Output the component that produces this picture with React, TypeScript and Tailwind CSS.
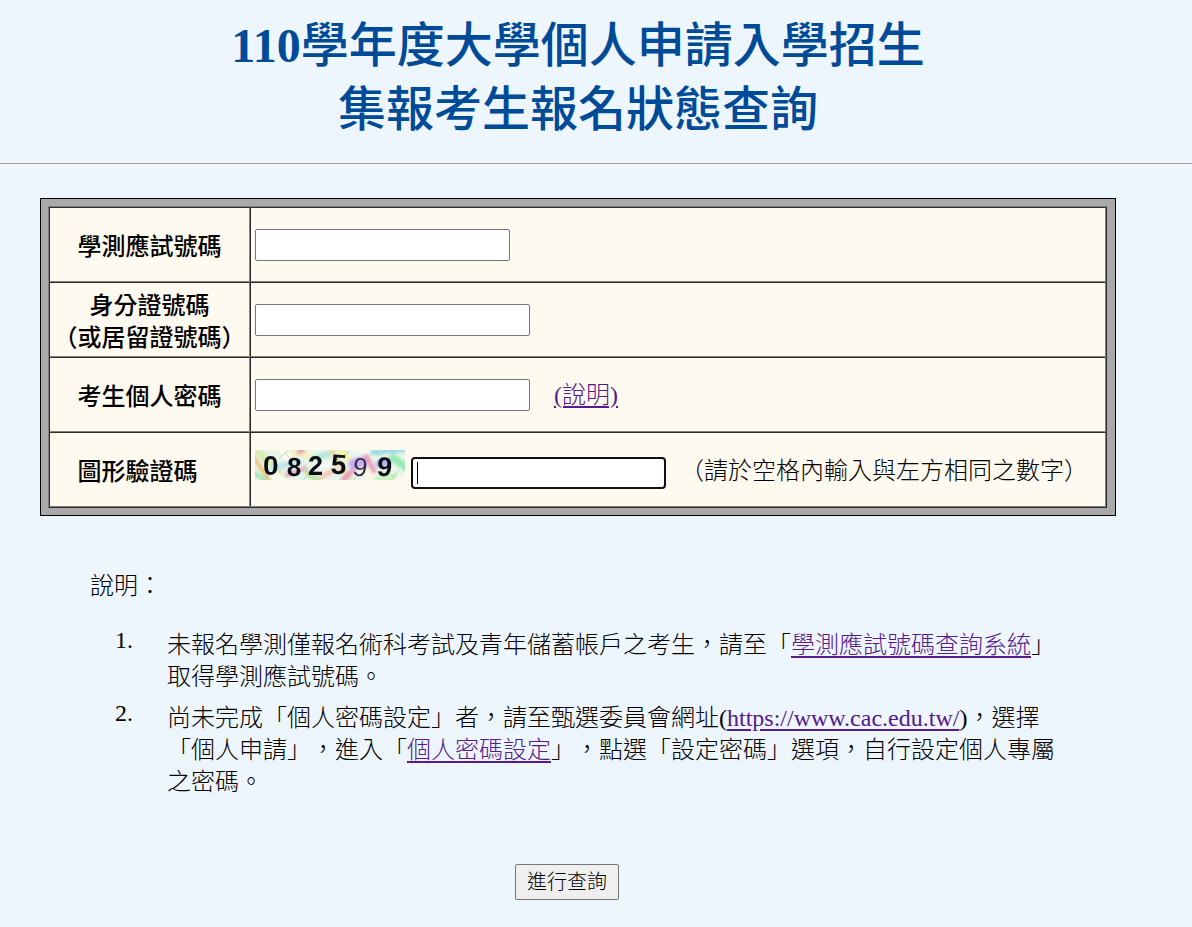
import React from 'react';

const INPUT_CLASS = 'block h-8 min-w-0 bg-white border border-[#767676] rounded-xs px-1 text-2xl';
const LINK_CLASS = 'text-[#551a8b] underline decoration-2 underline-offset-3';

interface FieldRowProps {
    id: string;
    label: React.ReactNode;
    children: React.ReactNode;
}

const FieldRow: React.FC<FieldRowProps> = ({ id, label, children }) => (
    <tr className="h-[75px] bg-[#fffaf0]">
        <th
            scope="row"
            className="w-[201px] p-0 pt-1 align-middle text-center font-medium whitespace-nowrap border border-t-[#2c2c2c] border-l-[#2c2c2c] border-r-[#808080] border-b-[#808080]"
        >
            <label htmlFor={id} className="block whitespace-pre">{label}</label>
        </th>
        <td className="py-0 pl-1 pr-1 align-middle border border-t-[#2c2c2c] border-l-[#2c2c2c] border-r-[#808080] border-b-[#808080]">
            <div className="flex items-center">{children}</div>
        </td>
    </tr>
);

const Captcha = () => (
    <svg width="150" height="30" viewBox="0 0 150 30" role="img" aria-label="082599" className="shrink-0 self-start">
        <defs>
            <filter id="soft" x="-20%" y="-20%" width="140%" height="140%">
                <feGaussianBlur stdDeviation="1.8" />
            </filter>
            <filter id="ink">
                <feGaussianBlur stdDeviation="0.4" />
            </filter>
            <clipPath id="frame">
                <rect width="150" height="30" />
            </clipPath>
        </defs>
        <g clipPath="url(#frame)">
            <rect width="150" height="30" fill="#e9f5ea" />
            <g filter="url(#soft)" fill="none" strokeLinecap="round">
                <path d="M-2 6L14 30" stroke="#f0bc75" strokeWidth="4" />
                <path d="M2 0L28 28" stroke="#d9ecae" strokeWidth="7" />
                <path d="M-2 22L12 32" stroke="#a9e3bb" strokeWidth="5" />
                <path d="M18 18L44 12" stroke="#c3e2ef" strokeWidth="6" />
                <path d="M20 26L28 30" stroke="#fbfbf0" strokeWidth="8" />
                <path d="M28 2L36 8" stroke="#fbfbf0" strokeWidth="8" />
                <path d="M38 3L56 6" stroke="#f5f1b8" strokeWidth="5" />
                <path d="M32 25L50 18" stroke="#e9b3cd" strokeWidth="5" />
                <path d="M44 2L48 0" stroke="#ec9dae" strokeWidth="5" />
                <path d="M52 22L62 30" stroke="#b8e3a0" strokeWidth="6" />
                <path d="M60 8L74 4" stroke="#b4e9df" strokeWidth="6" />
                <path d="M66 27L80 20" stroke="#f4c7b4" strokeWidth="5" />
                <path d="M62 16L76 14" stroke="#fbfbf2" strokeWidth="5" />
                <path d="M76 0L94 28" stroke="#f0d79c" strokeWidth="5" />
                <path d="M85 -2L92 8" stroke="#f6f29c" strokeWidth="6" />
                <path d="M88 30L98 20" stroke="#ea9cbb" strokeWidth="5" />
                <path d="M99 14L107 12" stroke="#cbaaf0" strokeWidth="11" />
                <path d="M108 22L120 28" stroke="#fbf9e8" strokeWidth="8" />
                <path d="M111 6L119 21" stroke="#eb9fbc" strokeWidth="5" />
                <path d="M100 0L112 1" stroke="#f8faf2" strokeWidth="6" />
                <path d="M118 2L150 -1" stroke="#9cdce4" strokeWidth="6" />
                <path d="M124 14L132 12" stroke="#b3b0ef" strokeWidth="7" />
                <path d="M138 8L152 18" stroke="#97ebb2" strokeWidth="8" />
                <path d="M122 29L140 26" stroke="#c8f2c0" strokeWidth="6" />
                <path d="M144 29L150 27" stroke="#fff6f0" strokeWidth="6" />
            </g>
            <path
                d="M24 8L34 0M30 2L34 8M48 30L58 20M78 12L94 2M98 30L106 24M120 2L128 8M136 30L144 20"
                fill="none"
                stroke="#8b9a8e"
                strokeWidth="0.6"
                opacity="0.6"
            />
            <g fill="#0b0f14" fontWeight="bold" filter="url(#ink)">
                <g fontFamily='"Liberation Sans Narrow", "Liberation Sans", sans-serif'>
                    <text x="8" y="25" fontSize="28">0</text>
                    <text x="76" y="24" fontSize="28" transform="rotate(4 82 14)">5</text>
                    <text x="98" y="26" fontSize="26" fontWeight="normal" fill="#33334e" transform="rotate(8 104 17)">9</text>
                </g>
                <g fontFamily='"Liberation Sans", Arial, sans-serif'>
                    <text x="32" y="26" fontSize="26" transform="rotate(3 39 17)">8</text>
                    <text x="53" y="25" fontSize="27">2</text>
                    <text x="122" y="26" fontSize="27" transform="rotate(4 129 17)">9</text>
                </g>
            </g>
        </g>
    </svg>
);

const App = () => {
    return (
        <div
            lang="zh-Hant"
            className="min-h-screen bg-[#edf5fd] text-black text-2xl leading-8 font-light font-['Liberation_Serif','Noto_Sans_CJK_TC',serif] [text-spacing-trim:space-all]"
        >
            <header className="border-b border-[#a0a0a0] pt-3.5 pb-[21px] pl-10 pr-19">
                <h1 className="text-center text-5xl leading-16 font-medium text-[#004b97]">
                    <span className="font-bold">110</span>學年度大學個人申請入學招生
                    <br />
                    集報考生報名狀態查詢
                </h1>
            </header>

            <form className="pl-10 pr-19 pt-[34px] pb-7" onSubmit={(e) => e.preventDefault()}>
                <div className="border border-black bg-[#a9a9a9] p-[7px] pr-2">
                    <table className="w-full border-separate border-spacing-0 border border-t-[#808080] border-l-[#808080] border-r-[#2c2c2c] border-b-[#2c2c2c]">
                        <tbody>
                            <FieldRow id="exam-no" label="學測應試號碼">
                                <input id="exam-no" type="text" className={`${INPUT_CLASS} w-[255px]`} />
                            </FieldRow>
                            <FieldRow id="id-no" label={<>身分證號碼<br />（或居留證號碼）</>}>
                                <input id="id-no" type="text" className={`${INPUT_CLASS} w-[275px]`} />
                            </FieldRow>
                            <FieldRow id="password" label="考生個人密碼">
                                <input id="password" type="password" className={`${INPUT_CLASS} w-[275px]`} />
                                <a href="#help" className={`${LINK_CLASS} ml-6`}>(說明)</a>
                            </FieldRow>
                            <FieldRow id="captcha" label={'圖形驗證碼\u3000'}>
                                <div className="flex h-[39px]">
                                    <Captcha />
                                    <div className="relative ml-1.5 self-end">
                                        <input
                                            id="captcha"
                                            type="text"
                                            autoFocus
                                            className="block h-8 w-[255px] bg-white border-2 border-[#101010] rounded-sm px-1 text-2xl outline-none caret-transparent"
                                        />
                                        <span className="absolute left-1.5 top-[5px] h-[22px] w-px bg-black" />
                                    </div>
                                </div>
                                <span className="ml-3.5 pt-0.5 whitespace-nowrap">（請於空格內輸入與左方相同之數字）</span>
                            </FieldRow>
                        </tbody>
                    </table>
                </div>

                <section id="help" className="px-[50px] pt-[54px]">
                    <p>說明：</p>
                    <ol className="mt-[27px] flex flex-col gap-[9px]">
                        <li className="flex">
                            <span className="w-[43px] shrink-0 text-right leading-[22px]">1.</span>
                            <p className="ml-[34px]">
                                未報名學測僅報名術科考試及青年儲蓄帳戶之考生，請至「<a href="#exam-no-query" className={LINK_CLASS}>學測應試號碼查詢系統</a>」取得學測應試號碼。
                            </p>
                        </li>
                        <li className="flex">
                            <span className="w-[43px] shrink-0 text-right leading-[22px]">2.</span>
                            <p className="ml-[34px]">
                                尚未完成「個人密碼設定」者，請至甄選委員會網址(<a href="https://www.cac.edu.tw/" className={LINK_CLASS}>https://www.cac.edu.tw/</a>)，選擇「個人申請」，進入「<a href="#set-password" className={LINK_CLASS}>個人密碼設定</a>」，點選「設定密碼」選項，自行設定個人專屬之密碼。
                            </p>
                        </li>
                    </ol>
                </section>

                <div className="mt-[66px] pr-[22px] flex justify-center">
                    <button
                        type="submit"
                        className="h-9 w-[104px] rounded-xs border border-[#767676] bg-[#efefef] text-xl leading-7"
                    >
                        進行查詢
                    </button>
                </div>
            </form>
        </div>
    );
};

export default App;
